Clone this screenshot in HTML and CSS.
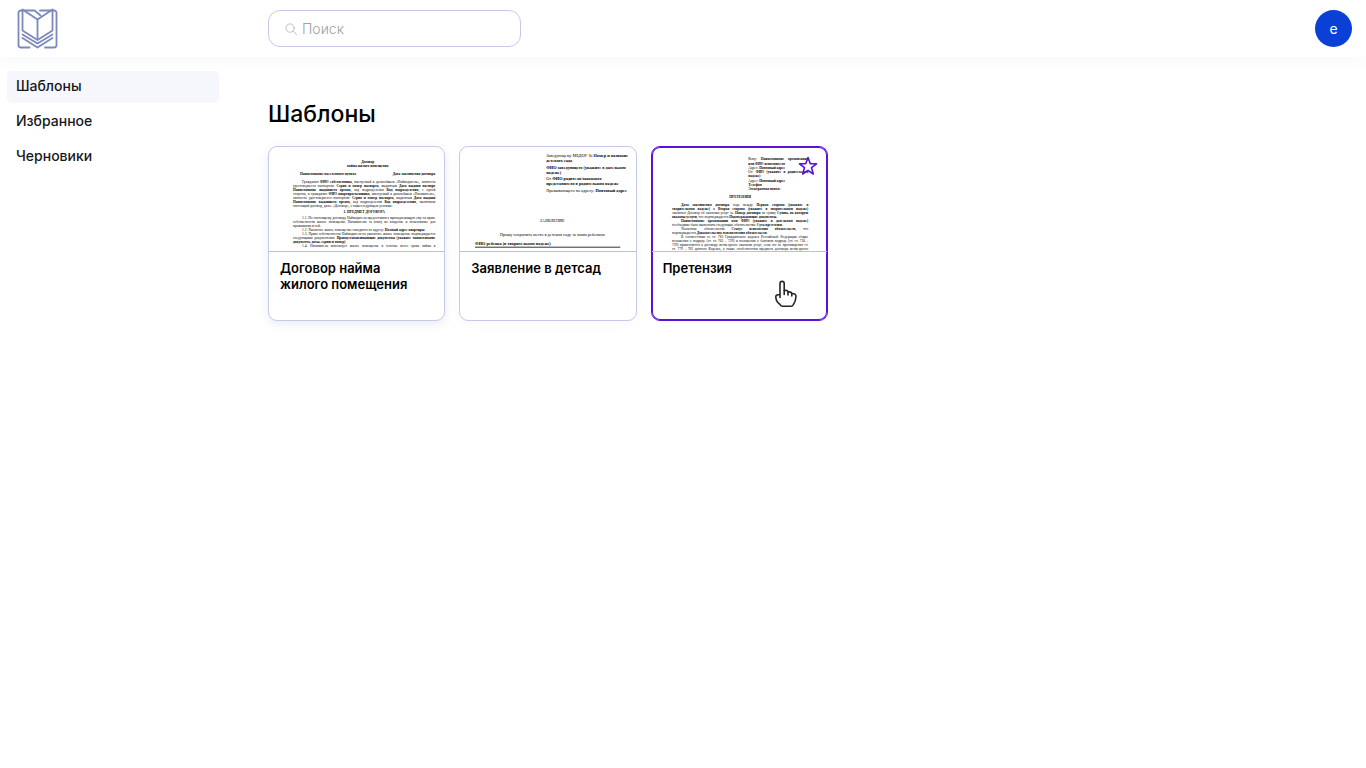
FILE: index.html
```
<!DOCTYPE html>
<html lang="ru">
<head>
<meta charset="utf-8">
<meta name="viewport" content="width=device-width, initial-scale=1">
<title>Шаблоны</title>
<link rel="stylesheet" href="styles.css">
</head>
<body>
<header class="topbar">
  <a class="logo" href="#" aria-label="На главную">
    <svg width="42" height="42" viewBox="0 0 42 42" fill="none" stroke="#7c8abb" stroke-width="1.800" stroke-linejoin="round" stroke-linecap="round">
      <path d="M6.500 2.500H5A2.500 2.500 0 0 0 2.500 5v32A2.500 2.500 0 0 0 5 39.500h8.500"/>
      <path d="M36.500 2.500H38A2.500 2.500 0 0 1 40.500 5v32a2.500 2.500 0 0 1-2.500 2.500H29"/>
      <path d="M6.500 1.500v21l15 9.500 15-9.500v-21L21.500 11.500z"/>
      <path d="M21.500 11.500V31.500M8 2.500h10.500l6 5M24 2.500h11"/>
      <path d="M6.500 26.500l15 9 15-9M6.500 30l15 9.500 15-9.500"/>
    </svg>
  </a>
  <label class="search">
    <svg width="12" height="12" viewBox="0 0 13 13" fill="none" stroke="#b9b9bd" stroke-linecap="round"><circle cx="5.500" cy="5.500" r="4.500"/><path d="M9 9l3.500 3.500"/></svg>
    <input class="search-input" type="search" placeholder="Поиск" aria-label="Поиск">
  </label>
  <button class="avatar" type="button" aria-label="Профиль e">e</button>
</header>
<div class="layout">
  <nav class="sidebar">
    <a class="nav-link active" href="#">Шаблоны</a>
    <a class="nav-link" href="#">Избранное</a>
    <a class="nav-link" href="#">Черновики</a>
  </nav>
  <main class="content">
    <h1 class="title">Шаблоны</h1>
    <div class="cards">
      <article class="card raised">
        <svg class="preview" viewBox="0 0 700 416"><foreignObject width="700" height="416"><div class="doc doc-lease">
          <p class="center"><b>Договор<br>найма жилого помещения</b></p>
          <p class="split"><b>Наименование населенного пункта</b><b>Дата заключения договора</b></p>
          <div class="block">
            <p class="line indent">Гражданин <b>ФИО собственника</b>, именуемый в дальнейшем «Наймодатель», личность</p>
            <p class="line">удостоверяется паспортом: <b>Серия и номер паспорта</b>, выданным <b>Дата выдачи паспорт</b></p>
            <p class="line"><b>Наименование выдавшего органа</b>, код подразделения <b>Код подразделения</b>, с одной</p>
            <p class="line">стороны, и гражданин <b>ФИО квартиросъемщика</b>, именуемый в дальнейшем «Наниматель»,</p>
            <p class="line">личность удостоверяется паспортом: <b>Серия и номер паспорта</b>, выданным <b>Дата выдачи</b></p>
            <p class="line"><b>Наименование выдавшего органа</b>, код подразделения <b>Код подразделения</b>, заключили</p>
            <p class="line last">настоящий договор, далее «Договор», о нижеследующем условии:</p>
          </div>
          <p class="center heading"><b>1. ПРЕДМЕТ ДОГОВОРА</b></p>
          <div class="block">
            <p class="line indent">1.1. По настоящему договору Наймодатель предоставляет принадлежащую ему на праве</p>
            <p class="line">собственности жилое помещение Нанимателю за плату во владение и пользование для</p>
            <p class="line last">проживания в ней.</p>
            <p class="line last indent">1.2. Указанное жилое помещение находится по адресу: <b>Полный адрес квартиры</b></p>
            <p class="line indent">1.3. Право собственности Наймодателя на указанное жилое помещение подтверждается</p>
            <p class="line">следующими документами: <b>Правоустанавливающие документы (укажите наименование</b></p>
            <p class="line last"><b>документа, даты, серию и номер)</b></p>
            <p class="line indent">1.4. Наниматель использует жилое помещение в течение всего срока найма в</p>
          </div>
        </div></foreignObject></svg>
        <h2 class="card-title">Договор найма<br>жилого помещения</h2>
      </article>
      <article class="card">
        <svg class="preview" viewBox="0 0 700 416"><foreignObject width="700" height="416"><div class="doc doc-kindergarten">
          <div class="addressee">
            <p>Заведующему МБДОУ № <b>Номер и название<br>детского сада</b></p>
            <p><b>ФИО заведующего (укажите в дательном<br>падеже)</b></p>
            <p>От <b>ФИО родителя/законного<br>представителя в родительном падеже</b></p>
            <p>Проживающего по адресу: <b>Почтовый адрес</b></p>
          </div>
          <p class="center statement">ЗАЯВЛЕНИЕ</p>
          <p class="center request">Прошу сохранить место в детском саду за моим ребенком</p>
          <p class="child"><b>ФИО ребенка (в творительном падеже)</b></p>
        </div></foreignObject></svg>
        <h2 class="card-title">Заявление в детсад</h2>
      </article>
      <article class="card selected">
        <svg class="preview" viewBox="0 0 700 416"><foreignObject width="700" height="416"><div class="doc doc-claim">
          <div class="addressee">
            <p class="line">Кому: <b>Наименование организации</b></p>
            <p class="line last"><b>или ФИО исполнителя</b></p>
            <p class="line last">Адрес: <b>Почтовый адрес</b></p>
            <p class="line">От: <b>ФИО (укажите в родительном</b></p>
            <p class="line last"><b>падеже)</b></p>
            <p class="line last">Адрес: <b>Почтовый адрес</b></p>
            <p class="line last"><b>Телефон</b></p>
            <p class="line last"><b>Электронная почта:</b></p>
          </div>
          <p class="center heading"><b>ПРЕТЕНЗИЯ</b></p>
          <div class="block">
            <p class="line indent"><b>Дата заключения договора</b> года между <b>Первая сторона (укажите в</b></p>
            <p class="line"><b>творительном падеже)</b> и <b>Вторая сторона (укажите в творительном падеже)</b></p>
            <p class="line">заключен Договор об оказании услуг № <b>Номер договора</b> на сумму <b>Сумма, на которую</b></p>
            <p class="line last"><b>оказаны услуги</b>, что подтверждается <b>Подтверждающие документы.</b></p>
            <p class="line indent"><b>Наименование организации или ФИО (укажите в дательном падеже)</b></p>
            <p class="line last">необходимо было выполнить следующие обязательства: <b>Суть претензии.</b></p>
            <p class="line indent">Указанные обязательства <b>Статус исполнения обязательств</b>, что</p>
            <p class="line last">подтверждается <b>Доказательства неисполнения обязательств.</b></p>
            <p class="line indent">В соответствии со ст. 783 Гражданского кодекса Российской Федерации общие</p>
            <p class="line">положения о подряде (ст. ст. 702 – 729) и положения о бытовом подряде (ст. ст. 730 –</p>
            <p class="line">739) применяются к договору возмездного оказания услуг, если это не противоречит ст.</p>
            <p class="line">ст. 779 – 782 данного Кодекса, а также особенностям предмета договора возмездного</p>
          </div>
        </div></foreignObject></svg>
        <button class="favorite" type="button" aria-label="В избранное">
          <svg width="20" height="20" viewBox="0 0 20 20" fill="none" stroke="#5a12d6" stroke-width="1.600" stroke-linejoin="round"><path d="M10 1.500l2.200 6.100 6.300.2-5 3.900 1.800 6.300L10 14.400 4.700 18l1.800-6.300-5-3.900 6.300-.2z"/></svg>
        </button>
        <h2 class="card-title">Претензия</h2>
        <svg class="pointer" width="24" height="28" viewBox="0 0 24 28" fill="#fff" stroke="#24262b" stroke-width="1.600" stroke-linejoin="round" stroke-linecap="round"><path d="M6 17.500V3.500a2 2 0 0 1 4.200 0v7c2-.4 3.600.2 3.800 1.500 2.200-.3 3.500.3 3.800 1.500 2.700-.2 4.200.7 4.200 3-.2 4-1.200 6-2.600 8-.5 1.200-1.200 1.700-2.400 1.700H8.500c-1.200 0-1.900-.5-2.400-1.700C3 22.500 2 20.500 1.800 17c-.1-1.400.8-2.300 2.200-2.300h2"/><path d="M10.200 10.500v4M14 12v3M17.800 13.500v2.500" fill="none"/></svg>
      </article>
    </div>
  </main>
</div>
</body>
</html>
```
FILE: styles.css
```
* { box-sizing: border-box; }

body {
  margin: 0;
  min-height: 100vh;
  background: #fff;
  color: #000;
  font-family: Inter, "Liberation Sans", sans-serif;
}

h1, h2, p { margin: 0; }

.topbar {
  display: flex;
  align-items: center;
  height: 57px;
  padding: 0 14px 0 16px;
  box-shadow: 0 4px 12px rgba(80, 90, 160, 0.04);
}

.logo {
  display: flex;
  width: 252px;
}

.search {
  display: flex;
  align-items: center;
  gap: 5px;
  width: 253px;
  height: 37px;
  padding: 0 16px;
  border: 1px solid #c5cae6;
  border-radius: 12px;
}

.search-input {
  flex: 1;
  min-width: 0;
  padding: 0;
  border: 0;
  outline: 0;
  background: transparent;
  font: 300 14px/20px Inter, "Liberation Sans", sans-serif;
}

.search-input::placeholder { color: #a0a0a3; }

.avatar {
  width: 37px;
  height: 37px;
  margin-left: auto;
  padding: 0;
  border: 0;
  border-radius: 50%;
  background: #0a40d6;
  color: #fff;
  font: 400 14px/20px Inter, "Liberation Sans", sans-serif;
}

.layout { display: flex; }

.sidebar {
  display: flex;
  flex-direction: column;
  gap: 3px;
  width: 268px;
  padding: 14px 49px 0 7px;
}

.nav-link {
  padding: 5px 9px 7px;
  border-radius: 5px;
  color: #17181c;
  font-size: 14px;
  font-weight: 500;
  line-height: 20px;
  text-decoration: none;
}

.nav-link.active { background: #f6f7fc; }

.content {
  flex: 1;
  padding: 41px 14px 0 0;
}

.title {
  font-size: 23px;
  font-weight: 500;
  line-height: 32px;
}

.cards {
  display: grid;
  grid-template-columns: repeat(3, minmax(0, 1fr));
  gap: 14px;
  max-width: 560px;
  margin-top: 16px;
}

.card {
  position: relative;
  min-height: 175px;
  border: 1px solid #c5cae6;
  border-radius: 9px;
  background: #fff;
  box-shadow: 0 3px 12px rgba(80, 90, 200, 0.03);
}

.card.raised { box-shadow: 0 3px 10px rgba(80, 90, 200, 0.12); }

.card.selected {
  border-color: #5a12d6;
  box-shadow: inset 0 0 0 1px #5a12d6;
}

.card-title {
  padding: 8px 11px;
  font-size: 13px;
  font-weight: 600;
  line-height: 16px;
}

/* Page previews are laid out at four times their displayed size. */
.preview {
  display: block;
  width: 100%;
  border-bottom: 1px solid #b9c0dc;
}

.doc {
  height: 416px;
  overflow: hidden;
  font-family: "Liberation Serif", serif;
  font-size: 14px;
  line-height: 16px;
  color: #000;
}

.center { text-align: center; }

.line {
  text-align: justify;
  text-align-last: justify;
  white-space: nowrap;
}

.line.last { text-align-last: left; }

.indent { padding-left: 36px; }

.doc-lease { padding: 52px 36px 0 96px; }

.doc-lease > .center { padding-left: 28px; }

.split {
  display: flex;
  justify-content: space-between;
  padding: 16px 0 16px 28px;
}

.doc-lease .heading { padding: 8px 0; }

.doc-kindergarten {
  padding: 26px 24px 0 60px;
  font-size: 17px;
  line-height: 20px;
}

.doc-kindergarten .addressee {
  display: grid;
  gap: 6px;
  padding-left: 284px;
  white-space: nowrap;
}

.statement { padding-top: 100px; }

.request { padding-top: 36px; }

.child {
  margin-right: 36px;
  padding-top: 18px;
  border-bottom: 4px solid #333;
}

.doc-claim { padding: 40px 76px 0 80px; }

.doc-claim .addressee {
  padding-left: 304px;
  line-height: 17px;
}

.doc-claim .heading { padding: 14px 0 18px; }

.favorite {
  position: absolute;
  top: 9px;
  right: 9px;
  display: flex;
  padding: 0;
  border: 0;
  background: transparent;
}

.pointer {
  position: absolute;
  right: 29px;
  bottom: 12px;
}
```
